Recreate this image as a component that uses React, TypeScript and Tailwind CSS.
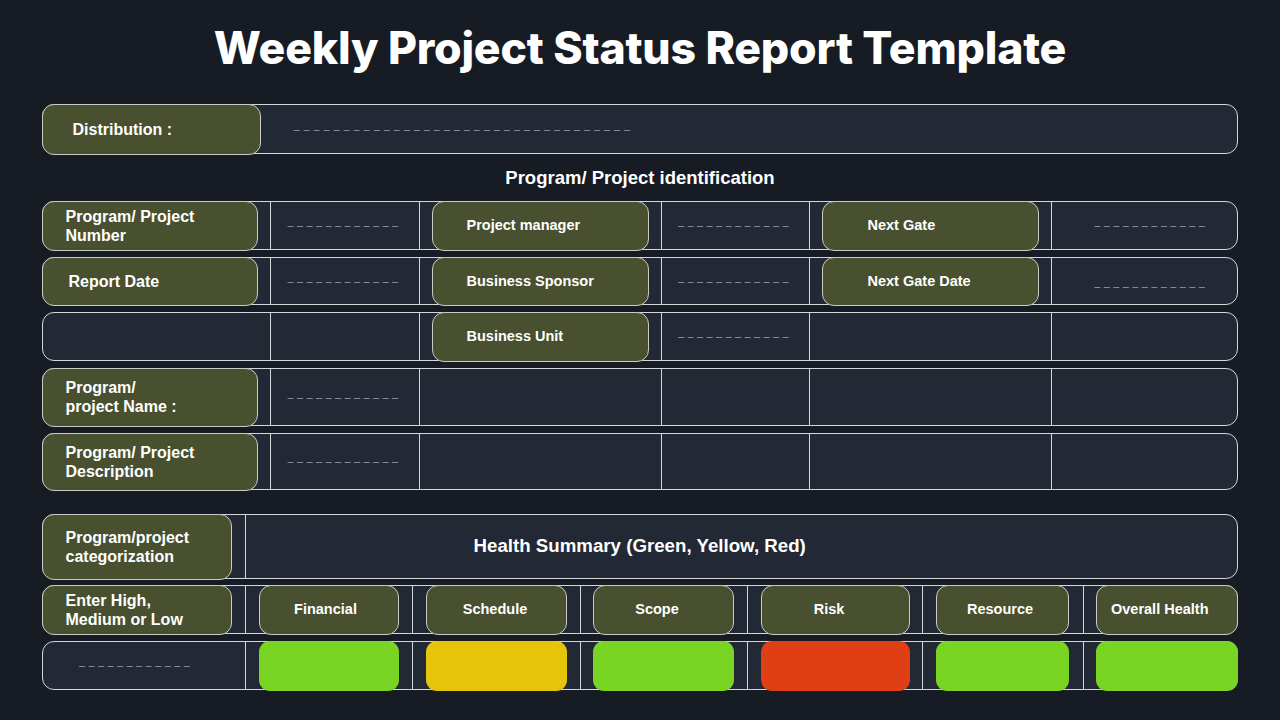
import React from "react";
import clsx from "clsx";

function Label({
  children,
  className,
}: {
  children?: React.ReactNode;
  className?: string;
}) {
  return (
    <div
      className={clsx(
        "-my-[1.5px] flex items-center rounded-[12px] border-[1.5px] border-[#c9ccc2] bg-[#485030] font-bold leading-[19px] text-white",
        className
      )}
    >
      {children}
    </div>
  );
}

function Dashes({ count = 12, className }: { count?: number; className?: string }) {
  return (
    <span className={clsx("text-[11px] leading-none tracking-[3.4px] text-[#9a9fa8]", className)}>
      {"–".repeat(count)}
    </span>
  );
}

function Cell({
  children,
  className,
}: {
  children?: React.ReactNode;
  className?: string;
}) {
  return (
    <div className={clsx("flex border-l-[1.5px] border-[#d4d7db]", className)}>
      {children}
    </div>
  );
}

const rowBox =
  "rounded-[12px] border-[1.5px] border-[#d4d7db] bg-[#222834]";
const grid1 = "grid grid-cols-[226.5px_149px_242px_148px_242px_1fr]";
const grid2 = "grid grid-cols-[201.5px_167px_168px_167px_175px_161px_1fr]";

function IdRow({
  height,
  first,
  firstPad = "pl-[23px]",
  second,
  third,
  fourth,
  fifth,
  sixth,
  sixthClass,
}: {
  height: string;
  first?: React.ReactNode;
  firstPad?: string;
  second?: boolean;
  third?: React.ReactNode;
  fourth?: boolean;
  fifth?: React.ReactNode;
  sixth?: boolean;
  sixthClass?: string;
}) {
  return (
    <div className={clsx(rowBox, grid1, height)}>
      <div className="flex">
        {first && (
          <Label className={clsx("-ml-[1.5px] mr-3 flex-1 text-[16px]", firstPad)}>
            {first}
          </Label>
        )}
      </div>
      <Cell className="items-center justify-center">{second && <Dashes />}</Cell>
      <Cell>
        {third && <Label className="mx-3 flex-1 pl-[34px] text-[14.5px]">{third}</Label>}
      </Cell>
      <Cell className="items-center justify-center">{fourth && <Dashes />}</Cell>
      <Cell>
        {fifth && <Label className="mx-3 flex-1 pl-[45px] text-[14.5px]">{fifth}</Label>}
      </Cell>
      <Cell className={clsx("items-center justify-center pl-[14px]", sixthClass)}>
        {sixth && <Dashes />}
      </Cell>
    </div>
  );
}

const metrics = [
  { name: "Financial", color: "bg-[#7ad424]", cls: "ml-[13px] mr-[13px]", pad: "pr-[6px]" },
  { name: "Schedule", color: "bg-[#e6c409]", cls: "ml-[13px] mr-[13px]", pad: "pr-[2px]" },
  { name: "Scope", color: "bg-[#7ad424]", cls: "ml-[12px] mr-[13px]", pad: "pr-[12px]" },
  { name: "Risk", color: "bg-[#e03e14]", cls: "ml-[13px] mr-[12px]", pad: "pr-[12px]" },
  { name: "Resource", color: "bg-[#7ad424]", cls: "ml-[13px] mr-[14px]", pad: "pr-[4px]" },
  { name: "Overall Health", color: "bg-[#7ad424]", cls: "ml-[12px] -mr-[1px]", pad: "pr-[14px]" },
];

export default function App() {
  return (
    <div className="min-h-[720px] w-full bg-[#161b24] px-[42px] font-['Liberation_Sans',Arial,sans-serif]">
      <h1 className="h-[76px] pt-[20px] text-center font-['Inter',sans-serif] text-[44.6px] font-extrabold leading-[56px] tracking-[-0.2px] text-white">
        Weekly Project Status Report Template
      </h1>

      <div className={clsx(rowBox, "mt-[28px] flex h-[50px]")}>
        <Label className="-ml-[1.5px] w-[219px] pl-[30px] text-[16px]">Distribution :</Label>
        <div className="flex items-center pl-[33px]">
          <Dashes count={34} className="tracking-[3.9px]" />
        </div>
      </div>

      <div className="flex h-[47px] items-center justify-center text-[18.5px] font-bold text-white">
        Program/ Project identification
      </div>

      <div className="flex flex-col gap-[7px]">
        <IdRow
          height="h-[49px]"
          first={
            <span>
              Program/ Project
              <br />
              Number
            </span>
          }
          second
          third="Project manager"
          fourth
          fifth="Next Gate"
          sixth
        />
        <IdRow
          height="h-[48px]"
          first="Report Date"
          firstPad="pl-[26px]"
          second
          third="Business Sponsor"
          fourth
          fifth="Next Gate Date"
          sixth
          sixthClass="pt-[10px]"
        />
        <IdRow height="h-[49px]" third="Business Unit" fourth />
        <IdRow
          height="h-[58px]"
          first={
            <span>
              Program/
              <br />
              project Name :
            </span>
          }
          second
        />
        <IdRow
          height="h-[57px]"
          first={
            <span>
              Program/ Project
              <br />
              Description
            </span>
          }
          second
        />
      </div>

      <div className={clsx(rowBox, "mt-[24px] grid h-[65px] grid-cols-[201.5px_1fr]")}>
        <div className="flex">
          <Label className="-ml-[1.5px] mr-[13px] flex-1 pl-[23px] text-[16px]">
            <span>
              Program/project
              <br />
              categorization
            </span>
          </Label>
        </div>
        <Cell className="items-center pl-[228px] text-[18.7px] font-bold text-white">
          Health Summary (Green, Yellow, Red)
        </Cell>
      </div>

      <div className={clsx(rowBox, grid2, "mt-[6px] h-[49px]")}>
        <div className="flex">
          <Label className="-ml-[1.5px] mr-[13px] flex-1 pl-[23px] text-[16px]">
            <span>
              Enter High,
              <br />
              Medium or Low
            </span>
          </Label>
        </div>
        {metrics.map((m) => (
          <Cell key={m.name}>
            <Label className={clsx("flex-1 justify-center text-[14.5px]", m.cls, m.pad)}>
              {m.name}
            </Label>
          </Cell>
        ))}
      </div>

      <div className={clsx(rowBox, grid2, "mt-[7px] h-[49px]")}>
        <div className="flex items-center pl-[36px]">
          <Dashes />
        </div>
        {metrics.map((m) => (
          <Cell key={m.name}>
            <div className={clsx("-my-[1.5px] flex-1 rounded-[11px]", m.color, m.cls)} />
          </Cell>
        ))}
      </div>
    </div>
  );
}
